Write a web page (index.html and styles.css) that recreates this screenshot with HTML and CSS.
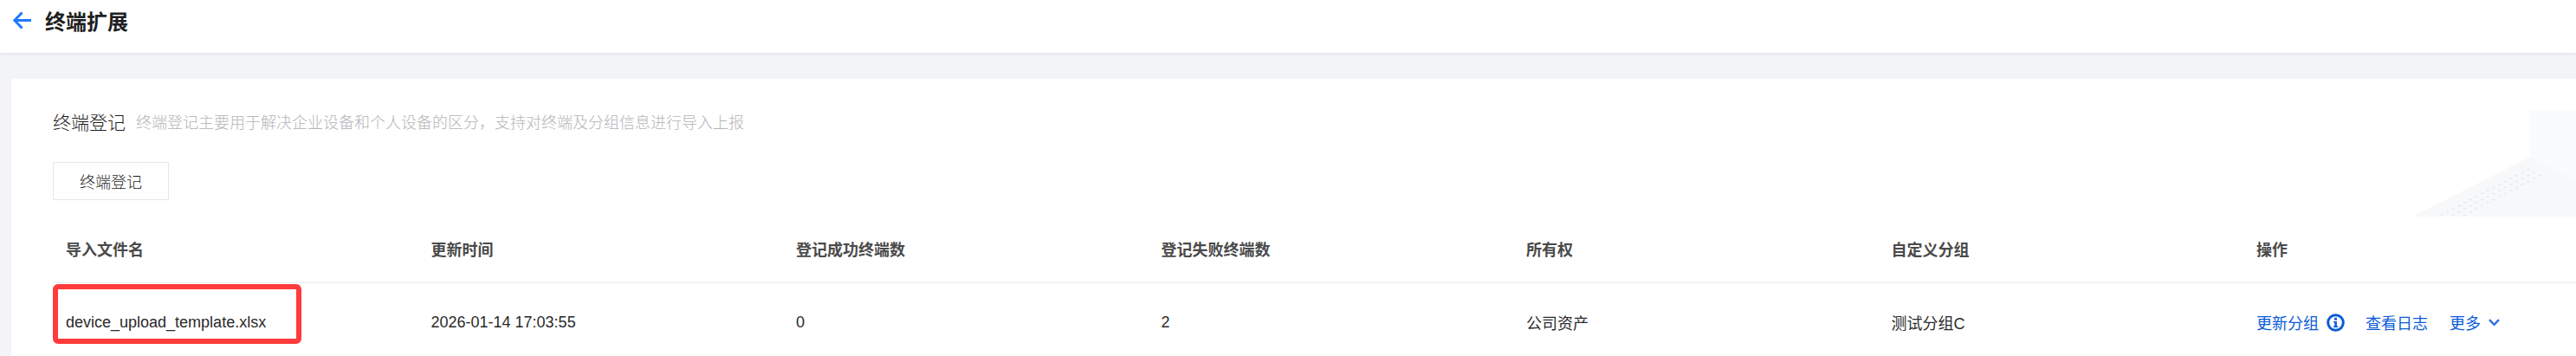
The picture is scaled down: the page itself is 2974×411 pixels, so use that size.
FILE: index.html
```html
<!DOCTYPE html>
<html>
<head>
<meta name="viewport" content="width=device-width, initial-scale=1">
<title>终端扩展</title>
<link rel="stylesheet" href="styles.css">
</head>
<body>

<div class="header">
    <svg class="back-icon" viewBox="0 0 21 21" width="21" height="21">
        <path d="M21 10.5H2M10.5 1.5L1.8 10.5L10.5 19.5" fill="none" stroke="#1a7aff" stroke-width="3"/>
    </svg>
    <span class="page-title">终端扩展</span>
</div>

<div class="card">
    <!-- background picture in the top right corner -->
    <svg class="card-deco" viewBox="0 0 189 123" width="189" height="123">
        <defs>
            <pattern id="dots" patternUnits="userSpaceOnUse" width="1" height="1" patternTransform="matrix(6.67 -3.5 6.67 3.5 0 121)">
                <rect x="0.4" y="0.4" width="0.28" height="0.28" fill="#e2e4ea"/>
            </pattern>
        </defs>
        <polygon points="136,0 189,0 189,80 136,54" fill="#fafbfd"/>
        <polygon points="136,54 0,123 189,123 189,80" fill="#f7f8fa"/>
        <polygon points="136,64 152,76 60,123 29,123" fill="url(#dots)"/>
    </svg>

    <div class="card-head">
        <span class="card-title">终端登记</span>
        <span class="card-desc">终端登记主要用于解决企业设备和个人设备的区分，支持对终端及分组信息进行导入上报</span>
    </div>
    <button class="reg-btn">终端登记</button>

    <div class="table-row table-head">
        <div>导入文件名</div>
        <div>更新时间</div>
        <div>登记成功终端数</div>
        <div>登记失败终端数</div>
        <div>所有权</div>
        <div>自定义分组</div>
        <div>操作</div>
    </div>
    <div class="table-row table-body">
        <div class="file-cell">device_upload_template.xlsx<span class="red-box"></span></div>
        <div>2026-01-14 17:03:55</div>
        <div>0</div>
        <div>2</div>
        <div>公司资产</div>
        <div>测试分组C</div>
        <div class="actions">
            <a href="#">更新分组</a>
            <svg class="info-icon" viewBox="0 0 21 21" width="21" height="21">
                <circle cx="10.5" cy="10.5" r="8.8" fill="none" stroke="#0a5bd8" stroke-width="3"/>
                <rect x="9" y="4.8" width="3" height="2.8" fill="#0a5bd8"/>
                <path d="M8 9H11.9V14.6H13.2V16H8V14.6H9.3V10.4H8Z" fill="#0a5bd8"/>
            </svg>
            <a href="#" class="link-log">查看日志</a>
            <a href="#" class="link-more">更多</a>
            <svg class="more-icon" viewBox="0 0 13 9" width="13" height="9">
                <path d="M1 1.2L6.5 6.8L12 1.2" fill="none" stroke="#2a6fe0" stroke-width="2.4"/>
            </svg>
        </div>
    </div>
</div>

</body>
</html>
```

FILE: styles.css
```css
html, body {
    margin: 0;
    height: 411px;
    overflow: hidden;
}

body {
    background-color: #f3f4f8;
    font-family: "Liberation Sans", "Noto Sans CJK SC", sans-serif;
    font-size: 18px;
    color: #222;
}

/* Top bar */
.header {
    display: flex;
    align-items: center;
    height: 61px;
    box-sizing: border-box;
    padding: 0 0 14px 15px;
    background-color: #fff;
    box-shadow: 0 1px 5px rgba(0,0,0,0.08);
}

.back-icon {
    margin-right: 16px;
}

.page-title {
    font-size: 24px;
    font-weight: bold;
    color: #1f1f1f;
}

/* Card */
.card {
    position: relative;
    margin: 30px 0 0 13px;
    height: 320px;
    box-sizing: border-box;
    padding: 32px 0 0 48px;
    background-color: #fff;
}

.card-deco {
    position: absolute;
    top: 36px;
    right: 0;
}

.card-head {
    position: relative;
    display: flex;
    align-items: center;
    height: 34px;
}

.card-title {
    font-size: 21px;
    font-weight: 300;
    color: #1f1f1f;
    margin-right: 12px;
}

.card-desc {
    color: #b4b4b8;
    font-weight: 300;
}

.reg-btn {
    display: block;
    width: 134px;
    height: 44px;
    margin-top: 30px;
    padding: 0;
    background-color: #fff;
    border: 1px solid #e6e7ec;
    font-family: inherit;
    font-size: 18px;
    font-weight: 300;
    color: #1f1f1f;
}

/* Table */
.table-row {
    position: relative;
    display: grid;
    grid-template-columns: repeat(6, 421.5px) 1fr;
    padding-left: 15px;
    align-items: center;
}

.table-head {
    height: 76px;
    padding-top: 18px;
    border-bottom: 2px solid #f2f3f5;
    font-weight: bold;
    color: #4a4a4a;
}

.table-body {
    height: 90px;
    color: #2a2a2a;
}

.file-cell {
    white-space: nowrap;
}

.red-box {
    position: absolute;
    left: 0;
    top: 1px;
    width: 287px;
    height: 69px;
    box-sizing: border-box;
    border: 6px solid #ff3b3b;
    border-radius: 6px;
}

.actions {
    display: flex;
    align-items: center;
}

.actions a {
    color: #0a5bd8;
    text-decoration: none;
}

.info-icon {
    margin-left: 9px;
}

.link-log {
    margin-left: 24px;
}

.link-more {
    margin-left: 25px;
}

.more-icon {
    margin-left: 9px;
}
```
